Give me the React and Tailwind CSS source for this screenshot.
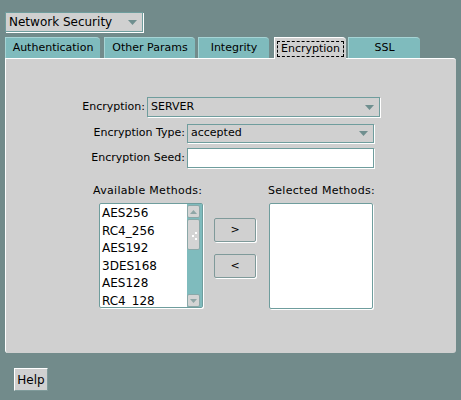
import React from 'react'

const font = { fontFamily: '"DejaVu Sans", Verdana, sans-serif' }

function Arrow() {
  return (
    <svg width="9" height="5" viewBox="0 0 9 5" className="shrink-0">
      <path d="M0 0 H9 L4.5 5 Z" fill="#6f8f8f" />
    </svg>
  )
}

function Combo({ value, className }) {
  return (
    <div className={`flex items-center justify-between border border-[#6f9d9d] bg-[#d0d0d0] shadow-[1px_1px_0_#ffffff] pl-[3px] pr-[5px] text-black ${className}`}>
      <span>{value}</span>
      <Arrow />
    </div>
  )
}

function Tab({ label, active, className }) {
  if (active) {
    return (
      <div className={`relative flex h-[22px] items-center justify-center rounded-tr-[4px] border-l border-t border-white bg-[#d0d0d0] -mb-px z-10 ${className}`}>
        <span className="border border-dashed border-black px-[3px] leading-[14px]">{label}</span>
      </div>
    )
  }
  return (
    <div className={`flex h-[21px] items-center justify-center rounded-tr-[4px] border-l border-t border-[#a6d4d5] bg-[#7fbbbd] text-black ${className}`}>
      {label}
    </div>
  )
}

function ScrollBtn({ up }) {
  return (
    <div className="flex h-[13px] w-[13px] items-center justify-center rounded-[2px] border border-[#8aa8a8] bg-[#d4d4d4]">
      <svg width="7" height="4" viewBox="0 0 7 4">
        <path d={up ? 'M0 4 L3.5 0 L7 4 Z' : 'M0 0 H7 L3.5 4 Z'} fill="#8fa6a6" />
      </svg>
    </div>
  )
}

export default function App() {
  const methods = ['AES256', 'RC4_256', 'AES192', '3DES168', 'AES128', 'RC4_128']

  return (
    <div style={font} className="h-[400px] w-[461px] bg-[#728b8b] pl-[5px] pt-[12px] text-[11px] text-black">
      <Combo value="Network Security" className="h-[20px] w-[138px] text-[12px]" />

      {/* tabs */}
      <div className="mt-[5px] flex items-end">
        <Tab label="Authentication" className="w-[95px]" />
        <Tab label="Other Params" className="ml-[4px] w-[91px]" />
        <Tab label="Integrity" className="ml-[3px] w-[71px]" />
        <Tab label="Encryption" active className="ml-[5px] w-[72px]" />
        <Tab label="SSL" className="ml-[2px] w-[72px]" />
      </div>

      {/* panel */}
      <div className="h-[295px] w-[451px] rounded-tr-[3px] rounded-b-[3px] border-l border-t border-white bg-[#d0d0d0] pt-[38px]">
        <div className="flex h-[20px] items-center">
          <span className="w-[141px] pr-[2px] text-right">Encryption:</span>
          <Combo value="SERVER" className="h-[20px] w-[233px]" />
        </div>
        <div className="mt-[7px] flex h-[19px] items-center">
          <span className="w-[181px] pr-[2px] text-right">Encryption Type:</span>
          <Combo value="accepted" className="h-[19px] w-[187px]" />
        </div>
        <div className="mt-[5px] flex h-[20px] items-center">
          <span className="w-[181px] pr-[2px] text-right">Encryption Seed:</span>
          <div className="h-[20px] w-[187px] border border-[#6f9d9d] bg-white shadow-[1px_1px_0_#ffffff]" />
        </div>

        <div className="mt-[16px] flex">
          <div className="ml-[87px] flex w-[112px] flex-col">
            <span className="leading-[14px] tracking-[0.3px]">Available Methods:</span>
            <div className="ml-[6px] mt-[5px] flex h-[105px] w-[104px] rounded-[2px] border border-[#6f9d9d] bg-white shadow-[1px_1px_0_#ffffff]">
              <div className="flex-1 overflow-hidden pl-[2px] pt-[1px] text-[12px] leading-[17.6px]">
                {methods.map((m) => (
                  <div key={m}>{m}</div>
                ))}
              </div>
              <div className="flex w-[15px] flex-col bg-[#7fbbbd] pt-[1px]">
                <ScrollBtn up />
                <div className="relative mt-[1px] h-[31px] w-[13px] rounded-[2px] border border-[#8aa8a8] bg-[#d4d4d4]">
                  <span className="absolute left-[7px] top-[12px] h-[2px] w-[2px] bg-white" />
                  <span className="absolute left-[4px] top-[15px] h-[2px] w-[2px] bg-white" />
                  <span className="absolute left-[7px] top-[18px] h-[2px] w-[2px] bg-white" />
                </div>
                <div className="flex-1" />
                <ScrollBtn />
              </div>
            </div>
          </div>

          <div className="ml-[9px] mt-[34px] flex flex-col">
            <div className="flex h-[24px] w-[42px] items-center justify-center rounded-[2px] border border-[#7f9a9a] bg-[#d0d0d0] shadow-[1px_1px_0_#ffffff]">&gt;</div>
            <div className="mt-[12px] flex h-[24px] w-[42px] items-center justify-center rounded-[2px] border border-[#7f9a9a] bg-[#d0d0d0] shadow-[1px_1px_0_#ffffff]">&lt;</div>
          </div>

          <div className="ml-[12px] flex flex-col">
            <span className="leading-[14px] tracking-[0.3px]">Selected Methods:</span>
            <div className="ml-[1px] mt-[5px] h-[106px] w-[104px] rounded-[2px] border border-[#6f9d9d] bg-white shadow-[1px_1px_0_#ffffff]" />
          </div>
        </div>
      </div>

      <div className="ml-[9px] mt-[15px] flex h-[23px] w-[34px] items-center justify-center border border-white border-r-[#7f9a9a] border-b-[#7f9a9a] bg-[#d0d0d0] text-[12px]">
        Help
      </div>
    </div>
  )
}
